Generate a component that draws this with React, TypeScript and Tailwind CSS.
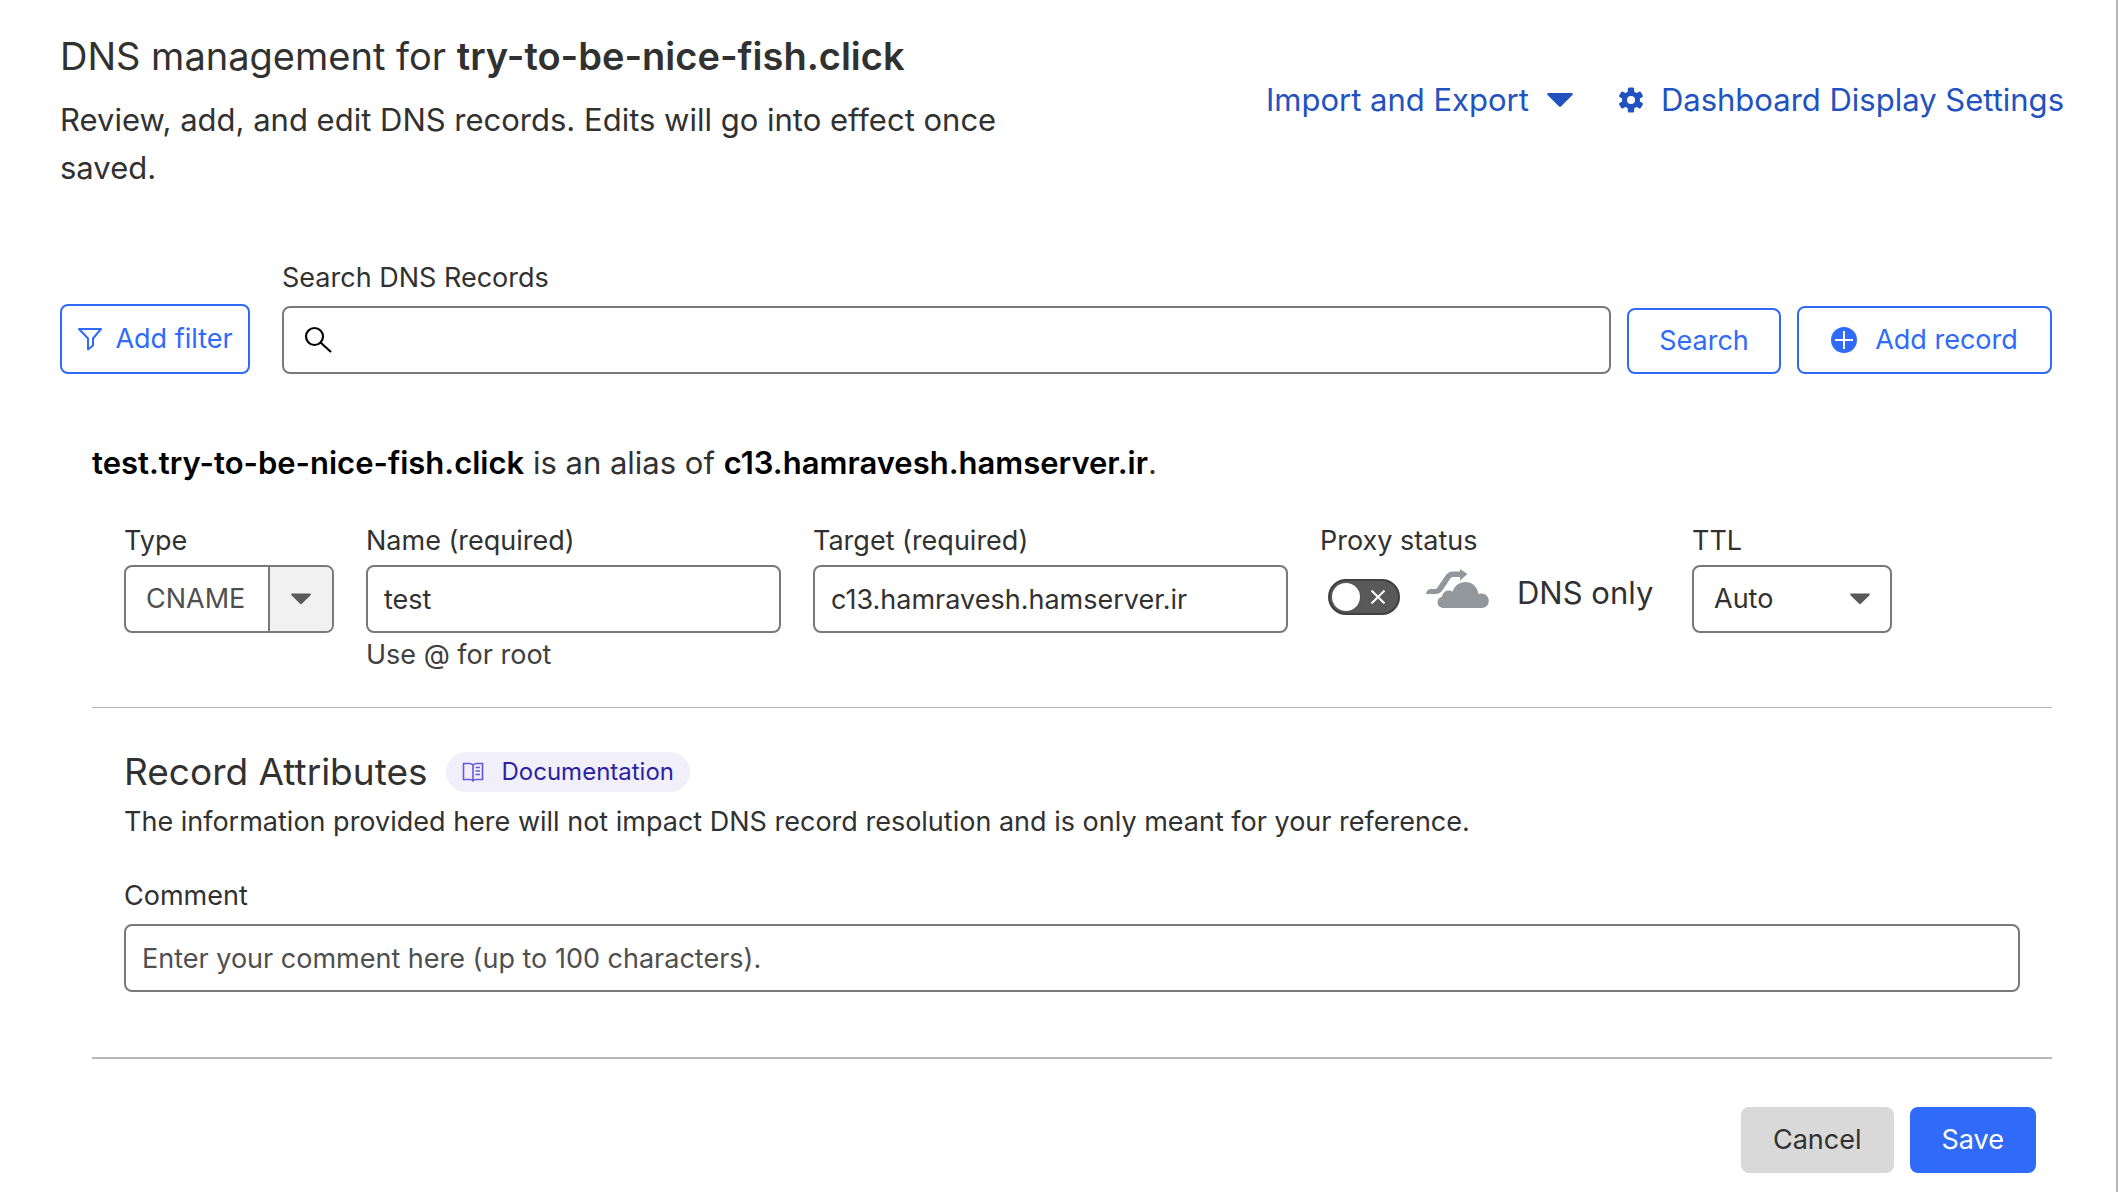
import { useState } from "react";
import type { ReactNode } from "react";

const inputClass =
  "h-[68px] w-full rounded-lg border-2 border-[#797979] bg-white px-4 text-[27px] text-[#313131] placeholder:text-[#4f4f4f] outline-none focus:border-[#2f6bf8]";

const outlineButton =
  "flex items-center justify-center rounded-lg border-2 border-[#2f6bf8] bg-white text-[27px] text-[#2f6bf8] hover:bg-blue-50";

function Caret({ className }: { className: string }) {
  return (
    <svg viewBox="0 0 26 14" className={className} fill="currentColor" aria-hidden="true">
      <path d="M1.5 0h23c1.2 0 1.7 1.3.9 2.1L14.2 13.3c-.7.7-1.7.7-2.4 0L.6 2.1C-.2 1.3.3 0 1.5 0z" />
    </svg>
  );
}

function GearIcon() {
  return (
    <svg viewBox="0 0 24 26" className="h-[26px] w-6" aria-hidden="true">
      <g fill="currentColor">
        <circle cx="12" cy="13" r="9" />
        <rect x="8.8" y="0.5" width="6.4" height="25" rx="1.5" />
        <rect x="8.8" y="0.5" width="6.4" height="25" rx="1.5" transform="rotate(60 12 13)" />
        <rect x="8.8" y="0.5" width="6.4" height="25" rx="1.5" transform="rotate(120 12 13)" />
      </g>
      <circle cx="12" cy="13" r="4" fill="#fff" />
    </svg>
  );
}

function FilterIcon() {
  return (
    <svg viewBox="0 0 26 24" className="h-6 w-[26px]" fill="none" stroke="currentColor" strokeWidth="2" aria-hidden="true">
      <path d="M2 2h22l-8 9.5v7l-5 4v-11z" strokeLinejoin="round" />
    </svg>
  );
}

function SearchIcon() {
  return (
    <svg viewBox="0 0 28 28" className="h-7 w-7" fill="none" stroke="#000" strokeWidth="2.2" aria-hidden="true">
      <circle cx="10.5" cy="10.5" r="8.5" />
      <path d="M16.5 16.5 27 26" />
    </svg>
  );
}

function PlusIcon() {
  return (
    <svg viewBox="0 0 26 26" className="h-[26px] w-[26px]" aria-hidden="true">
      <circle cx="13" cy="13" r="13" fill="currentColor" />
      <path d="M13 4v18M4 13h18" stroke="#fff" strokeWidth="2" />
    </svg>
  );
}

function BookIcon() {
  return (
    <svg viewBox="0 0 22 20" className="h-5 w-[22px] text-[#6558dc]" fill="none" stroke="currentColor" strokeWidth="1.6" aria-hidden="true">
      <path d="M11 3C9.8 1.6 8.5 1.5 6.5 1.5h-5v16H8c1.5 0 2.3.3 3 1.3.7-1 1.5-1.3 3-1.3h6.5v-16h-5c-2 0-3.3.1-4.5 1.5zM11 3v15" />
      <path d="M13.5 5.500H18M13.500 9H18M13.500 12.500H18" />
    </svg>
  );
}

// grey cloud with the arrow passing over it
function BypassCloudIcon() {
  return (
    <svg viewBox="0 0 63 40" className="h-10 w-[63px]" fill="#92979b" aria-hidden="true">
      <path d="M34 0l7.5 5-7.500 6.500V8h-6.500c-1.500 0-2.500.6-3.500 2l-7 10.500C15 23.800 13 25 9.500 25H0c.8-3.200 2.200-5 5-5h3.500c1.500 0 2.400-.6 3.300-2l6.700-10C20.700 4.500 23 2.500 27 2.500h7z" />
      <path d="M18 39c-4 0-6.500-2.500-6.500-5.500 0-2.800 1.700-5 4.500-5.700.5-3.800 3.200-6.300 6.800-6.300 1.400 0 2.700.4 3.800 1.200C28.500 16.700 33.500 13 39.500 13c7 0 12.300 5 12.800 12 1-.4 1.900-.5 2.900-.5 4.300 0 7.600 3.200 7.600 7.300 0 4.200-3 7.200-7.300 7.200z" />
    </svg>
  );
}

type FieldProps = {
  id: string;
  label: string;
  children: ReactNode;
};

function Field({ id, label, children }: FieldProps) {
  return (
    <div className="flex min-w-0 flex-col">
      <label htmlFor={id} className="mb-1 text-[27px] leading-10">
        {label}
      </label>
      {children}
    </div>
  );
}

export default function App() {
  const [proxied, setProxied] = useState(false);

  return (
    <main className="min-h-screen border-r-2 border-[#b6b6b6] bg-white pt-7 pr-16 pb-4 pl-[60px] font-['Inter',sans-serif] text-[#313131]">
      <header className="flex items-start justify-between">
        <div className="w-1/2">
          <h1 className="text-[38px] leading-14">
            DNS management for <b className="font-semibold">try-to-be-nice-fish.click</b>
          </h1>
          <p className="mt-3 text-[31px] leading-12">
            Review, add, and edit DNS records. Edits will go into effect once saved.
          </p>
        </div>
        <div className="-mr-3 flex items-center gap-[46px] pt-12 text-[31px] leading-12 text-[#2152c0]">
          <button type="button" className="flex items-center gap-[18px]">
            Import and Export
            <Caret className="h-3.5 w-[26px]" />
          </button>
          <a href="#display-settings" className="flex items-center gap-[18px]">
            <GearIcon />
            Dashboard Display Settings
          </a>
        </div>
      </header>

      <form className="mt-[66px] flex items-end" onSubmit={(e) => e.preventDefault()}>
        <button type="button" className={`${outlineButton} h-[70px] w-[190px] gap-3`}>
          <FilterIcon />
          Add filter
        </button>
        <div className="ml-8 flex-1">
          <label htmlFor="search" className="mb-2 block text-[27px] leading-10">
            Search DNS Records
          </label>
          <div className="relative">
            <input id="search" type="text" className={`${inputClass} pl-16`} />
            <span className="pointer-events-none absolute inset-y-0 left-[22px] flex items-center">
              <SearchIcon />
            </span>
          </div>
        </div>
        <button type="submit" className={`${outlineButton} ml-4 h-[66px] w-[154px]`}>
          Search
        </button>
        <button type="button" className={`${outlineButton} ml-4 h-[68px] w-[255px] gap-[18px]`}>
          <PlusIcon />
          Add record
        </button>
      </form>

      <form className="mt-[65px] pl-8" onSubmit={(e) => e.preventDefault()}>
        <p className="text-[31px] leading-12">
          <b className="font-semibold text-black">test.try-to-be-nice-fish.click</b> is an alias of{" "}
          <b className="font-semibold text-black">c13.hamravesh.hamserver.ir</b>.
        </p>

        <div className="mt-[34px] grid grid-cols-[210px_415fr_475fr_340px_200px] gap-8 border-b border-[#b6b6b6] pr-40 pb-8 pl-8">
          <Field id="type" label="Type">
            <div className="relative">
              <select
                id="type"
                defaultValue="CNAME"
                className="h-[68px] w-full appearance-none rounded-lg border-2 border-[#797979] bg-white px-5 text-[27px] text-[#4f4f4f]"
              >
                <option>A</option>
                <option>AAAA</option>
                <option>CNAME</option>
                <option>MX</option>
                <option>TXT</option>
              </select>
              <span className="pointer-events-none absolute inset-y-0.5 right-0.5 flex w-16 items-center justify-center rounded-r-md border-l-2 border-[#797979] bg-[#f1f1f1] text-[#595959]">
                <Caret className="h-3 w-5" />
              </span>
            </div>
          </Field>
          <Field id="name" label="Name (required)">
            <input id="name" type="text" defaultValue="test" className={inputClass} />
            <p className="mt-0.5 text-[27px] leading-10 text-[#404040]">Use @ for root</p>
          </Field>
          <Field id="target" label="Target (required)">
            <input id="target" type="text" defaultValue="c13.hamravesh.hamserver.ir" className={inputClass} />
          </Field>
          <Field id="proxy" label="Proxy status">
            <div className="flex items-center pt-1 pl-2">
              <span className="relative mt-2 flex h-9 w-[72px]">
                <input
                  id="proxy"
                  type="checkbox"
                  role="switch"
                  checked={proxied}
                  onChange={(e) => setProxied(e.target.checked)}
                  className="peer h-9 w-[72px] appearance-none rounded-full border-2 border-[#404040] bg-[#595959] checked:bg-[#2f6bf8]"
                />
                <span className="pointer-events-none absolute top-1 left-1 h-7 w-7 rounded-full bg-white shadow peer-checked:left-10" />
                <svg
                  viewBox="0 0 14 14"
                  className="pointer-events-none absolute top-[11px] right-[15px] h-3.5 w-3.5 peer-checked:hidden"
                  stroke="#fff"
                  strokeWidth="2"
                  aria-hidden="true"
                >
                  <path d="M.5.5l13 13M13.5.5l-13 13" />
                </svg>
              </span>
              <span className="ml-[26px] self-start">
                <BypassCloudIcon />
              </span>
              <span className="ml-7 text-[31px] leading-12 whitespace-nowrap">DNS only</span>
            </div>
          </Field>
          <Field id="ttl" label="TTL">
            <div className="relative">
              <select
                id="ttl"
                defaultValue="Auto"
                className="h-[68px] w-full appearance-none rounded-lg border-2 border-[#797979] bg-white px-5 text-[27px] text-[#313131]"
              >
                <option>Auto</option>
                <option>1 min</option>
                <option>5 min</option>
                <option>1 hr</option>
              </select>
              <span className="pointer-events-none absolute inset-y-0 right-[22px] flex items-center text-[#595959]">
                <Caret className="h-3 w-5" />
              </span>
            </div>
          </Field>
        </div>

        <section className="border-b-2 border-[#b6b6b6] px-8 pt-9 pb-[65px]">
          <div className="flex items-center gap-[18px]">
            <h2 className="text-[37px] leading-14">Record Attributes</h2>
            <a
              href="#documentation"
              className="flex h-10 items-center gap-[18px] rounded-full bg-[#f1f0fa] px-4 text-[24px] text-[#2c1fa3]"
            >
              <BookIcon />
              Documentation
            </a>
          </div>
          <p className="mt-0.5 text-[27px] leading-10">
            The information provided here will not impact DNS record resolution and is only meant for your reference.
          </p>
          <div className="mt-[34px] flex flex-col">
            <label htmlFor="comment" className="mb-2 text-[27px] leading-10">
              Comment
            </label>
            <input
              id="comment"
              type="text"
              placeholder="Enter your comment here (up to 100 characters)."
              className={inputClass}
            />
          </div>
        </section>

        <div className="flex justify-end gap-4 pt-12 pr-4 text-[27px]">
          <button type="button" className="h-[66px] rounded-lg bg-[#d9d9d9] px-8 hover:bg-[#cccccc]">
            Cancel
          </button>
          <button type="submit" className="h-[66px] rounded-lg bg-[#2f6bf8] px-8 text-white hover:bg-[#2152c0]">
            Save
          </button>
        </div>
      </form>
    </main>
  );
}
